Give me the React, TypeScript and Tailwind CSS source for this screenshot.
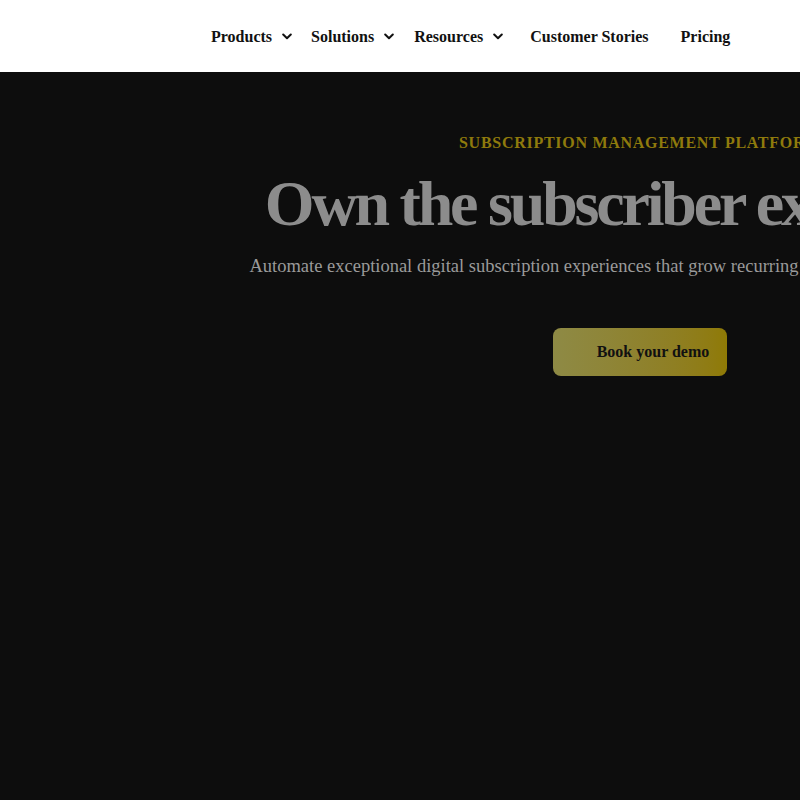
import React from 'react'

const navItems = [
  { label: 'Products', dropdown: true, gap: '' },
  { label: 'Solutions', dropdown: true, gap: 'ml-[19px]' },
  { label: 'Resources', dropdown: true, gap: 'ml-[20px]' },
  { label: 'Customer Stories', dropdown: false, gap: 'ml-[27px]' },
  { label: 'Pricing', dropdown: false, gap: 'ml-[32px]' },
]

function Chevron() {
  return (
    <svg width="10" height="7" viewBox="0 0 10 7" fill="none" className="shrink-0">
      <path d="M1.2 1.5l3.8 3.8 3.8-3.8" stroke="#111" strokeWidth="2" strokeLinecap="round" strokeLinejoin="round" />
    </svg>
  )
}

export default function App() {
  return (
    <div className="w-full min-h-[800px] overflow-hidden bg-[#0d0d0d] font-['Liberation_Serif','Times_New_Roman',serif]">
      <header className="h-[72px] bg-white flex items-center pt-[1px]">
        <nav className="flex items-center pl-[211px]">
          {navItems.map((item) => (
            <a
              key={item.label}
              href="#"
              className={`flex items-center gap-[10px] text-[16px] font-bold text-[#111] ${item.gap}`}
            >
              {item.label}
              {item.dropdown && <Chevron />}
            </a>
          ))}
        </nav>
      </header>

      <section className="w-[1280px] flex flex-col items-center text-center pt-[63px]">
        <p className="text-[16px] font-bold tracking-[0.045em] text-[#8f7a0c] leading-none">
          SUBSCRIPTION MANAGEMENT PLATFORM
        </p>
        <h1 className="mt-[15px] text-[64px] font-bold leading-[1.2] tracking-[-0.05em] text-[#8c8c8c] whitespace-nowrap">
          Own the subscriber experience
        </h1>
        <p className="mt-[11px] pr-[26px] text-[18.5px] leading-[1.35] text-[#9a9a9a] whitespace-nowrap">
          Automate exceptional digital subscription experiences that grow recurring revenue and lifetime value.
        </p>
        <a
          href="#"
          className="mt-[49px] h-[48px] flex items-center pl-[44px] pr-[18px] rounded-[8px] bg-gradient-to-r from-[#8e8a45] to-[#8f7a05] text-[16px] font-bold text-[#111]"
        >
          Book your demo
        </a>
      </section>
    </div>
  )
}
